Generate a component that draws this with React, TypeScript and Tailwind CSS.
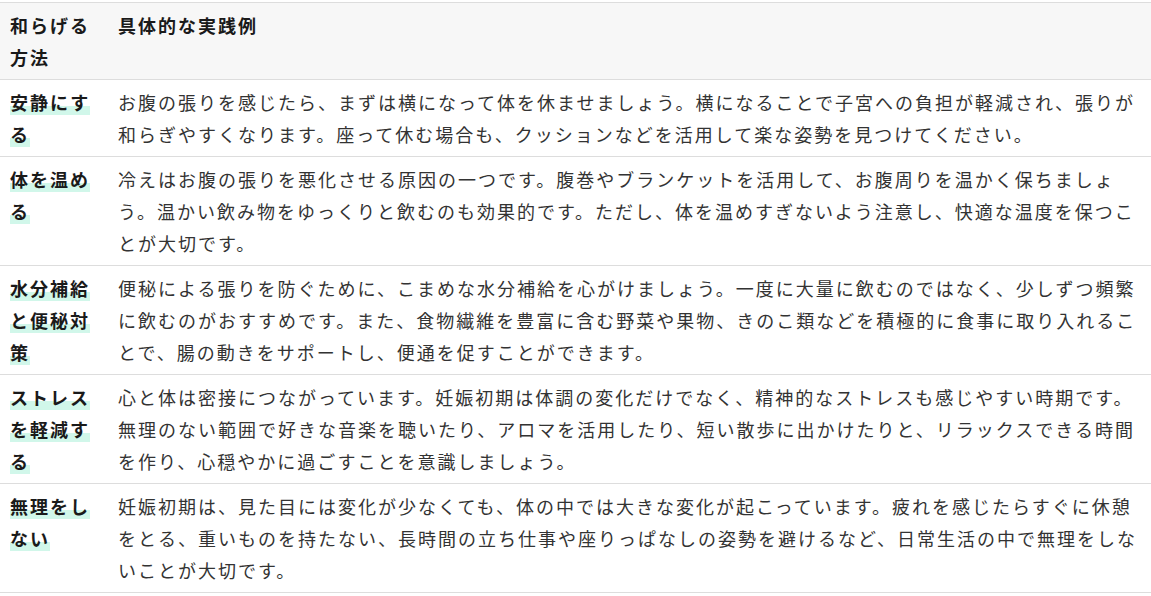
import React from 'react';

const rows = [
  {
    method: "安静にする",
    text: "お腹の張りを感じたら、まずは横になって体を休ませましょう。横になることで子宮への負担が軽減され、張りが和らぎやすくなります。座って休む場合も、クッションなどを活用して楽な姿勢を見つけてください。",
  },
  {
    method: "体を温める",
    text: "冷えはお腹の張りを悪化させる原因の一つです。腹巻やブランケットを活用して、お腹周りを温かく保ちましょう。温かい飲み物をゆっくりと飲むのも効果的です。ただし、体を温めすぎないよう注意し、快適な温度を保つことが大切です。",
  },
  {
    method: "水分補給と便秘対策",
    text: "便秘による張りを防ぐために、こまめな水分補給を心がけましょう。一度に大量に飲むのではなく、少しずつ頻繁に飲むのがおすすめです。また、食物繊維を豊富に含む野菜や果物、きのこ類などを積極的に食事に取り入れることで、腸の動きをサポートし、便通を促すことができます。",
  },
  {
    method: "ストレスを軽減する",
    text: "心と体は密接につながっています。妊娠初期は体調の変化だけでなく、精神的なストレスも感じやすい時期です。無理のない範囲で好きな音楽を聴いたり、アロマを活用したり、短い散歩に出かけたりと、リラックスできる時間を作り、心穏やかに過ごすことを意識しましょう。",
  },
  {
    method: "無理をしない",
    text: "妊娠初期は、見た目には変化が少なくても、体の中では大きな変化が起こっています。疲れを感じたらすぐに休憩をとる、重いものを持たない、長時間の立ち仕事や座りっぱなしの姿勢を避けるなど、日常生活の中で無理をしないことが大切です。",
  },
];

const font = { fontFamily: '"Noto Sans CJK JP", "Noto Sans", sans-serif' };

export default function App() {
  return (
    <div className="w-[1151px] h-[596px] bg-white pt-[2px] overflow-hidden" style={font}>
      <table className="w-full border-collapse text-[18px] leading-[32px] tracking-[2px]">
        <colgroup>
          <col className="w-[108px]" />
          <col />
        </colgroup>
        <thead>
          <tr className="bg-[#f7f7f7] border-t border-b border-[#dddddd]">
            <th className="text-left align-top font-bold text-[#1a1a1a] pl-[10px] pr-[8px] py-[6px]">和らげる方法</th>
            <th className="text-left align-top font-bold text-[#1a1a1a] pl-[10px] pr-[6px] py-[6px]">具体的な実践例</th>
          </tr>
        </thead>
        <tbody>
          {rows.map((r, i) => (
            <tr key={i} className="border-b border-[#dddddd]">
              <td className="align-top font-bold text-[#1a1a1a] pl-[10px] pr-[8px] py-[6px]">
                <span className="bg-[linear-gradient(transparent_64%,#d1f7ea_64%)]">{r.method}</span>
              </td>
              <td className="align-top text-[#333] pl-[10px] pr-[6px] py-[6px]">{r.text}</td>
            </tr>
          ))}
        </tbody>
      </table>
    </div>
  );
}
